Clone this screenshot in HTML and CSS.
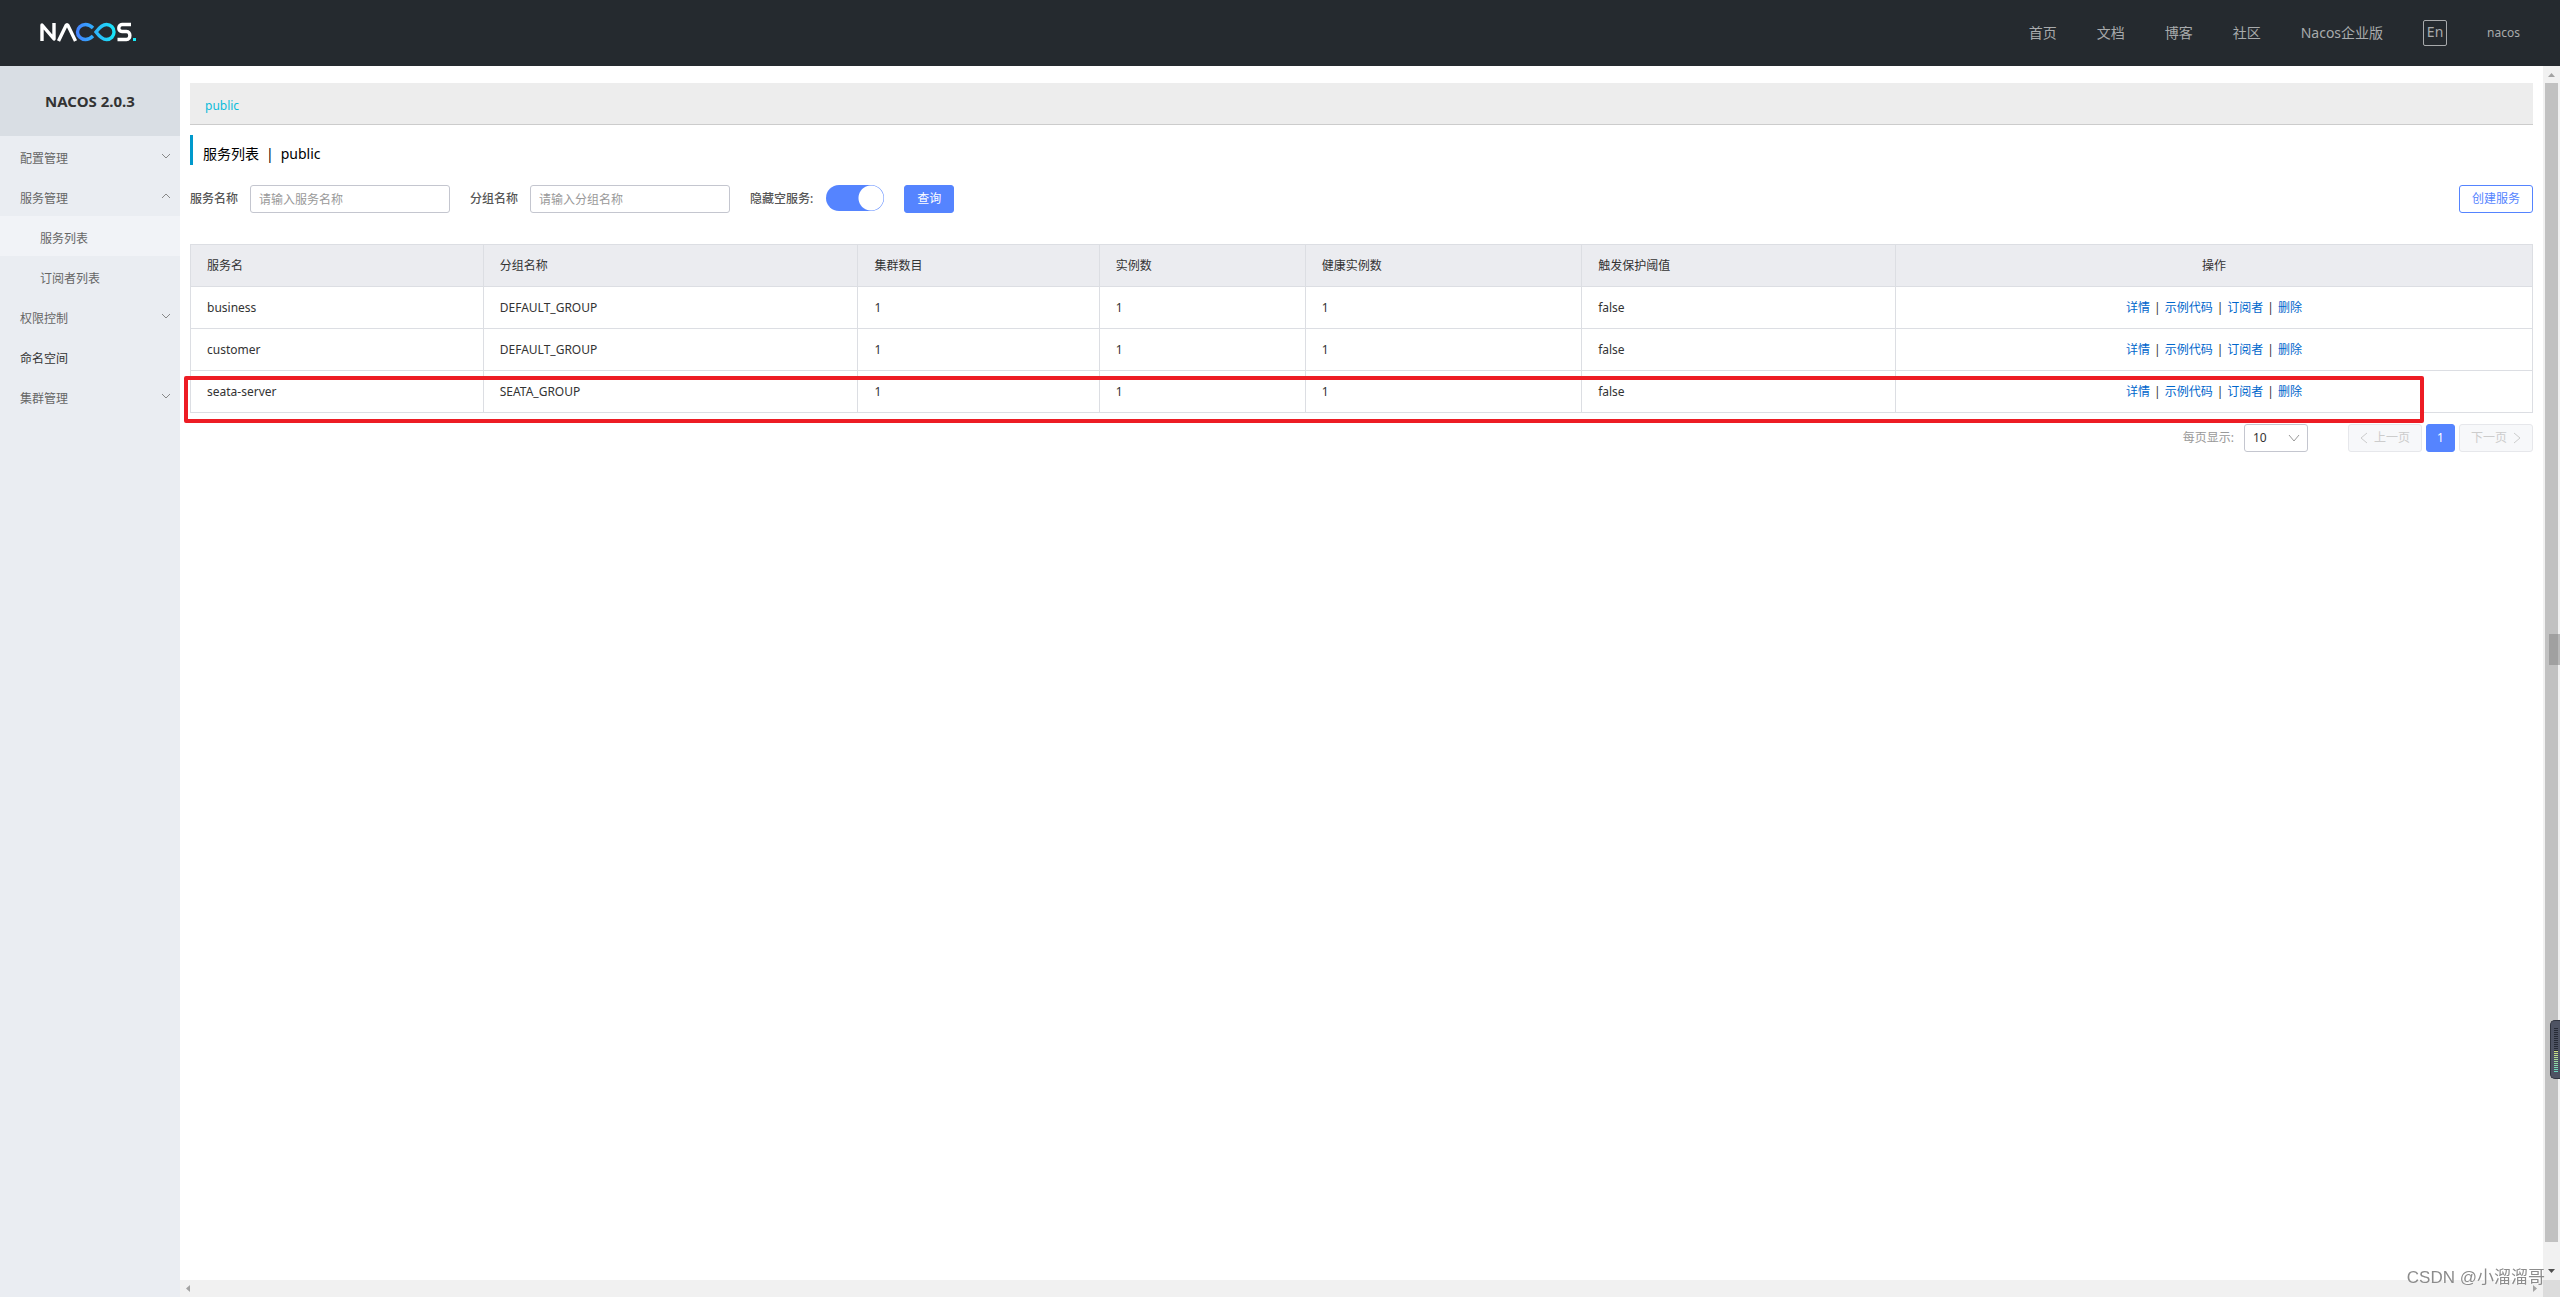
FILE: index.html
```html
<!DOCTYPE html>
<html lang="zh-CN">
<head>
<meta charset="utf-8">
<title>Nacos</title>
<link rel="stylesheet" href="styles.css">
</head>
<body>
<header class="topbar">
  <a class="logo" href="#" aria-label="Nacos">
    <svg width="98" height="20" viewBox="0 0 98 20" fill="none">
      <defs><linearGradient id="loop" x1="36" y1="0" x2="76" y2="0" gradientUnits="userSpaceOnUse"><stop offset="0" stop-color="#4481ff"/><stop offset="1" stop-color="#17e9f7"/></linearGradient></defs>
      <path d="M2 19V3L14 17V1" stroke="#fff" stroke-width="3.400" stroke-linejoin="round"/>
      <path d="M18.500 19L26 3.500Q27 2 28 3.500L35.500 19" stroke="#fff" stroke-width="3.400"/>
      <path d="M53 6C50.500 3.500 48 2.500 45.500 2.500C41 2.500 37.500 6 37.500 10S41 17.500 45.500 17.500C48 17.500 50.500 16.500 53 14" stroke="url(#loop)" stroke-width="3.400"/>
      <path d="M56 10C59 6 62 2.500 66.500 2.500C71 2.500 74 6 74 10S71 17.500 66.500 17.500C62 17.500 59 14 56 10Z" stroke="url(#loop)" stroke-width="3.400"/>
      <path d="M91 2.500H82C78 2.500 77.500 9.500 82 9.500H86.500C91 9.500 91 17.500 86.500 17.500H77.500" stroke="#fff" stroke-width="3.400"/>
      <rect x="93" y="16" width="3" height="3" fill="#17e9f7"/>
    </svg>
  </a>
  <nav class="topnav">
    <a href="#">首页</a>
    <a href="#">文档</a>
    <a href="#">博客</a>
    <a href="#">社区</a>
    <a href="#">Nacos企业版</a>
    <button class="lang" type="button">En</button>
    <a class="user" href="#">nacos</a>
  </nav>
</header>
<div class="body">
  <aside class="sidebar">
    <h1 class="version">NACOS 2.0.3</h1>
    <nav class="menu">
      <a href="#">配置管理<svg class="chev" viewBox="0 0 10 6"><path d="M1 1l4 4 4-4"/></svg></a>
      <a href="#">服务管理<svg class="chev" viewBox="0 0 10 6"><path d="M1 5l4-4 4 4"/></svg></a>
      <a class="sub active" href="#">服务列表</a>
      <a class="sub" href="#">订阅者列表</a>
      <a href="#">权限控制<svg class="chev" viewBox="0 0 10 6"><path d="M1 1l4 4 4-4"/></svg></a>
      <a class="leaf" href="#">命名空间</a>
      <a href="#">集群管理<svg class="chev" viewBox="0 0 10 6"><path d="M1 1l4 4 4-4"/></svg></a>
    </nav>
  </aside>
  <div class="pane">
    <main class="content">
      <div class="namespace"><a href="#">public</a></div>
      <h2 class="title"><span>服务列表</span><span>|</span><span>public</span></h2>
      <form class="filters">
        <label for="service">服务名称</label>
        <input class="text" id="service" type="text" placeholder="请输入服务名称">
        <label for="group">分组名称</label>
        <input class="text" id="group" type="text" placeholder="请输入分组名称">
        <label for="hide">隐藏空服务:</label>
        <input class="switch" id="hide" type="checkbox" checked>
        <button class="btn primary" type="button">查询</button>
        <button class="btn outline" type="button">创建服务</button>
      </form>
      <div class="tablewrap">
        <table>
          <colgroup><col class="c1"><col class="c2"><col class="c3"><col class="c4"><col class="c5"><col class="c6"><col></colgroup>
          <thead><tr><th>服务名</th><th>分组名称</th><th>集群数目</th><th>实例数</th><th>健康实例数</th><th>触发保护阈值</th><th class="ops">操作</th></tr></thead>
          <tbody>
            <tr><td>business</td><td>DEFAULT_GROUP</td><td>1</td><td>1</td><td>1</td><td>false</td><td class="ops"><a href="#">详情</a><i>|</i><a href="#">示例代码</a><i>|</i><a href="#">订阅者</a><i>|</i><a href="#">删除</a></td></tr>
            <tr><td>customer</td><td>DEFAULT_GROUP</td><td>1</td><td>1</td><td>1</td><td>false</td><td class="ops"><a href="#">详情</a><i>|</i><a href="#">示例代码</a><i>|</i><a href="#">订阅者</a><i>|</i><a href="#">删除</a></td></tr>
            <tr><td>seata-server</td><td>SEATA_GROUP</td><td>1</td><td>1</td><td>1</td><td>false</td><td class="ops"><a href="#">详情</a><i>|</i><a href="#">示例代码</a><i>|</i><a href="#">订阅者</a><i>|</i><a href="#">删除</a></td></tr>
          </tbody>
        </table>
        <div class="marker"></div>
      </div>
      <div class="pager">
        <label for="size">每页显示:</label>
        <span class="selectbox">
          <select id="size"><option>10</option><option>20</option></select>
          <svg viewBox="0 0 12 8"><path d="M1 1l5 6 5-6"/></svg>
        </span>
        <button class="page" type="button" disabled><svg viewBox="0 0 8 12"><path d="M7 1L1 6l6 5"/></svg>上一页</button>
        <button class="page current" type="button">1</button>
        <button class="page" type="button" disabled>下一页<svg viewBox="0 0 8 12"><path d="M1 1l6 5-6 5"/></svg></button>
      </div>
    </main>
    <div class="vbar">
      <svg class="arrow" viewBox="0 0 17 17"><path d="M5 11h7L8.500 7z" fill="#a3a3a3"/></svg>
      <div class="thumb"></div>
      <svg class="arrow" viewBox="0 0 17 17"><path d="M5 6h7L8.500 10z" fill="#505050"/></svg>
    </div>
    <div class="hbar">
      <svg class="arrow" viewBox="0 0 17 17"><path d="M10 5v7L6 8.500z" fill="#a3a3a3"/></svg>
      <svg class="arrow" viewBox="0 0 17 17"><path d="M7 5v7l4-3.500z" fill="#a3a3a3"/></svg>
    </div>
    <div class="corner"></div>
  </div>
</div>
<div class="handle"></div>
<div class="meter"><span class="idle"></span><span class="level"></span></div>
<div class="credit">CSDN @小溜溜哥</div>
</body>
</html>
```
FILE: styles.css
```css
* { box-sizing: border-box; }
body {
  margin: 0;
  height: 100vh;
  display: flex;
  flex-direction: column;
  overflow: hidden;
  font: 12px/20px "Noto Sans", "Noto Sans CJK SC", sans-serif;
  color: #333;
  background: #fff;
}
a { color: inherit; text-decoration: none; }
button, input, select { font: inherit; margin: 0; }

.topbar {
  height: 66px;
  flex: none;
  display: flex;
  align-items: center;
  justify-content: space-between;
  padding: 0 40px;
  background: #252a2f;
}
.logo { padding-bottom: 2px; }
.logo svg { display: block; }
.topnav { display: flex; align-items: center; gap: 40px; font-size: 14px; color: #a8aaac; }
.lang {
  width: 24px;
  height: 26px;
  padding: 0 0 2px;
  border: 1px solid #a8aaac;
  border-radius: 2px;
  background: none;
  color: inherit;
  font-size: 14px;
  line-height: 20px;
}
.user { font-size: 12px; }

.body { flex: 1; min-height: 0; display: flex; }
.sidebar { width: 180px; flex: none; background: #eaedf2; }
.version {
  margin: 0;
  height: 70px;
  line-height: 70px;
  text-align: center;
  font-size: 15px;
  background: #d9dee4;
}
.menu { color: #666; }
.menu a {
  display: flex;
  align-items: center;
  justify-content: space-between;
  height: 40px;
  padding: 5px 9px 0 20px;
}
.menu .sub { padding-left: 40px; }
.menu .active { background: #f1f3f7; }
.menu .leaf { color: #333; }
.chev { width: 10px; height: 6px; margin-bottom: 5px; fill: none; stroke: #888; }

.pane { flex: 1; min-width: 0; display: grid; grid-template: 1fr 17px / 1fr 17px; }
.content { padding: 17px 10px 0 10px; min-width: 0; }
.namespace {
  height: 42px;
  padding: 3px 15px 0;
  line-height: 40px;
  background: #ededed;
  border-bottom: 1px solid #ccc;
  color: #0bbcdb;
}
.title {
  display: flex;
  gap: 7px;
  margin: 10px 0 20px;
  height: 30px;
  padding: 4px 0 0 10px;
  border-left: 3px solid #09c;
  font-size: 14px;
  font-weight: 400;
  line-height: 30px;
  color: #000;
}
.filters { display: flex; align-items: center; height: 28px; margin-bottom: 31px; }
.filters label { margin-right: 12px; color: #555; font-weight: 500; }
.text {
  width: 200px;
  height: 28px;
  margin-right: 20px;
  padding: 0 8px;
  border: 1px solid #c4c6cf;
  border-radius: 3px;
  color: #333;
}
.text::placeholder { color: #999; }
.switch {
  appearance: none;
  width: 58px;
  height: 26px;
  margin: 0 20px 2px 1px;
  border-radius: 13px;
  background: radial-gradient(circle at 45px 13px, #fff 12px, #5584ff 13px);
}
.btn { height: 28px; padding: 0 12px; border: 1px solid #5584ff; border-radius: 3px; }
.primary { background: #5584ff; color: #fff; }
.outline { margin-left: auto; background: #fff; color: #5584ff; }

.tablewrap { position: relative; }
table { width: 100%; table-layout: fixed; border-collapse: collapse; }
th, td {
  height: 42px;
  padding: 1px 16px 0;
  border: 1px solid #dcdee3;
  text-align: left;
  font-weight: 400;
}
th { background: #ebecf0; }
.c1 { width: 12.5%; }
.c2 { width: 16%; }
.c3 { width: 10.3%; }
.c4 { width: 8.8%; }
.c5 { width: 11.8%; }
.c6 { width: 13.4%; }
.ops { text-align: center; }
.ops a { color: #06c; }
.ops i { margin: 0 4px; font-style: normal; }
.marker {
  position: absolute;
  left: -6px;
  right: 109px;
  bottom: -10px;
  height: 47px;
  border: 4px solid #ed1c24;
  border-radius: 2px;
}

.pager { display: flex; justify-content: flex-end; align-items: center; padding-top: 11px; color: #999; }
.selectbox { display: flex; align-items: center; width: 64px; height: 28px; margin: 0 40px 0 10px; }
.selectbox select {
  appearance: none;
  width: 64px;
  height: 28px;
  flex: none;
  padding: 0 8px;
  border: 1px solid #c4c6cf;
  border-radius: 3px;
  background: none;
  color: #333;
}
.selectbox svg { width: 12px; height: 8px; margin-left: -20px; fill: none; stroke: #999; }
.page {
  display: flex;
  align-items: center;
  justify-content: center;
  gap: 6px;
  width: 74px;
  height: 28px;
  padding: 0;
  border: 1px solid #e6e7eb;
  border-radius: 3px;
  background: #f7f8fa;
  color: #ccc;
}
.page svg { width: 8px; height: 12px; fill: none; stroke: #ccc; }
.current { width: 29px; margin: 0 4px; background: #5584ff; border-color: #5584ff; color: #fff; }

.vbar { display: flex; flex-direction: column; background: #f1f1f1; }
.thumb { flex: 1; margin: 0 2px; background: #c1c1c1; }
.vbar .arrow:last-child { margin-top: 21px; }
.hbar { display: flex; justify-content: space-between; background: #f1f1f1; }
.arrow { width: 17px; height: 17px; flex: none; }
.corner { background: #dcdcdc; }

.handle { position: fixed; right: 0; top: 634px; width: 11px; height: 31px; background: rgba(128, 128, 128, .5); }
.meter {
  position: fixed;
  right: 0;
  top: 1020px;
  width: 10px;
  height: 59px;
  padding: 7px 2px 0 3px;
  border: 1px solid #30343f;
  border-right: 0;
  border-radius: 5px 0 0 5px;
  background: #4e5363;
}
.meter span { display: block; -webkit-mask: repeating-linear-gradient(#000 0 1px, transparent 1px 2px); }
.idle { height: 23px; background: #262a35; }
.level { height: 22px; background: linear-gradient(#d3e07c, #5fd6c2); }
.credit {
  position: fixed;
  right: 15px;
  bottom: 6px;
  font: 17px/26px "Liberation Sans", "Noto Sans CJK SC", sans-serif;
  color: #8c8c8c;
  text-shadow: -1px -1px 0 #fff;
}
```
